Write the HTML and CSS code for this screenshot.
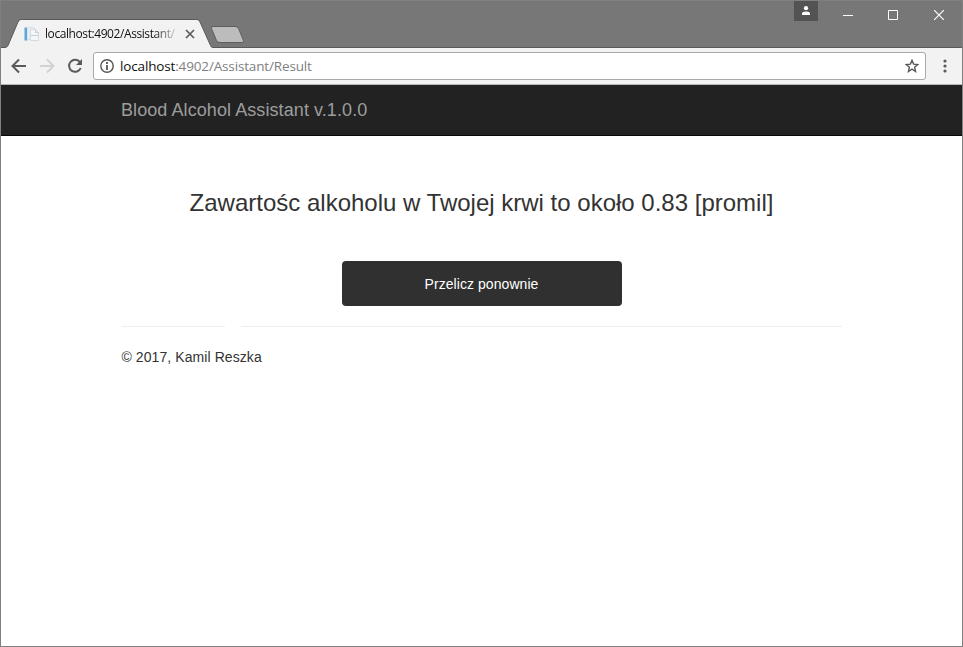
FILE: index.html
```html
<!DOCTYPE html>
<html lang="pl">
<head>
<meta charset="utf-8">
<title>Blood Alcohol Assistant</title>
<link rel="stylesheet" href="styles.css">
</head>
<body>
<div class="window">
  <header class="titlebar">
    <div class="tab">
      <svg class="tab-shape" width="214" height="29" viewBox="0 0 214 29"><path d="M0 28.500H4Q6 28.500 7 26.500L17 3Q18 .5 20 .5H196Q198 .5 199 3L209.500 26.500Q210 28.500 212 28.500V29H0Z" fill="#f2f2f2"/><path d="M0 28.500H4Q6 28.500 7 26.500L17 3Q18 .5 20 .5H196Q198 .5 199 3L209.500 26.500Q210 28.500 212 28.500" fill="none" stroke="#5b585a"/></svg>
      <svg class="favicon" width="16" height="16" viewBox="0 0 16 16"><path d="M.5 1.500h3v13h-3z" fill="#5aa7dc"/><path d="M3.500 1.500h7v12h-7z" fill="#e9edf0" stroke="#dde2e6"/><path d="M6.500 3.500h5l3 3v8h-8z" fill="#f4f7fa" stroke="#d3dae2"/><path d="M11.500 3.500v3h3M7 9.500h7" fill="none" stroke="#c3cfdb"/></svg>
      <span class="tab-title">localhost:4902/Assistant/</span>
      <svg class="tab-close" width="10" height="10" viewBox="0 0 10 10"><path d="M1 1l8 8M9 1L1 9" stroke="#5a5a5a" stroke-width="1.700"/></svg>
    </div>
    <svg class="new-tab" width="36" height="18" viewBox="0 0 36 18"><path d="M3 .5H25Q27.500 .5 28.500 2.500L33.500 14.500Q34 16.500 32 16.500H10Q7.500 16.500 6.500 14.500L1.500 2.500Q1 .5 3 .5Z" fill="#bcbcbc" stroke="#5e5e5e"/></svg>
    <div class="controls">
      <div class="profile"><svg width="10" height="10" viewBox="0 0 10 10"><circle cx="5" cy="2.200" r="2.100" fill="#fff"/><path d="M1 9V7.500Q1 5.500 5 5.500T9 7.500V9Z" fill="#fff"/></svg></div>
      <svg width="10" height="10" viewBox="0 0 10 10"><path d="M0 5.500h10" stroke="#fff"/></svg>
      <svg width="10" height="10" viewBox="0 0 10 10"><path d="M.5.5h9v9h-9z" fill="none" stroke="#fff"/></svg>
      <svg width="10" height="10" viewBox="0 0 10 10"><path d="M0 0l10 10M10 0L0 10" stroke="#fff" stroke-width="1.200"/></svg>
    </div>
  </header>
  <div class="toolbar">
    <svg class="nav-icon" width="16" height="16" viewBox="0 0 16 16"><path d="M15 8H2M8 1.500L1.500 8L8 14.500" fill="none" stroke="#5a5a5a" stroke-width="2"/></svg>
    <svg class="nav-icon" width="16" height="16" viewBox="0 0 16 16"><path d="M1 8h13M8 1.500L14.500 8L8 14.500" fill="none" stroke="#d2d2d2" stroke-width="2"/></svg>
    <svg class="nav-icon" width="16" height="16" viewBox="0 0 16 16"><path d="M13 4.300A6 6 0 1 0 13.700 10" fill="none" stroke="#5a5a5a" stroke-width="2"/><path d="M15 1v6H9Z" fill="#5a5a5a"/></svg>
    <div class="address">
      <svg width="14" height="14" viewBox="0 0 14 14"><circle cx="7" cy="7" r="6.200" fill="none" stroke="#555" stroke-width="1.400"/><path d="M7 3v2M7 6v5" stroke="#555" stroke-width="1.800"/></svg>
      <span class="url"><b>localhost</b>:4902/Assistant/Result</span>
      <svg class="star" width="14" height="14" viewBox="0 0 14 14"><path d="M7 1.300L8.600 5.100L12.800 5.500L9.600 8.200L10.600 12.500L7 10.200L3.400 12.500L4.400 8.200L1.200 5.500L5.400 5.100Z" fill="none" stroke="#5a5a5a" stroke-width="1.400"/></svg>
    </div>
    <svg class="menu" width="4" height="14" viewBox="0 0 4 14"><g fill="#5a5a5a"><circle cx="2" cy="2" r="1.600"/><circle cx="2" cy="7" r="1.600"/><circle cx="2" cy="12" r="1.600"/></g></svg>
  </div>
  <nav class="navbar"><a class="brand">Blood Alcohol Assistant v.1.0.0</a></nav>
  <main class="container">
    <h3>Zawartośc alkoholu w Twojej krwi to około 0.83 [promil]</h3>
    <button class="again">Przelicz ponownie</button>
    <div class="rules"><hr><hr></div>
    <footer>© 2017, Kamil Reszka</footer>
  </main>
</div>
</body>
</html>
```
FILE: styles.css
```css
* { box-sizing: border-box; }
body { margin: 0; background: #fff; font-family: "Liberation Sans", Arial, sans-serif; color: #333; }
svg { display: block; flex: none; }
.window { height: 647px; border: 1px solid #808080; overflow: hidden; }
.titlebar { display: flex; height: 47px; background: #777; border-bottom: 1px solid #5b585a; }
.tab { position: relative; display: flex; align-items: center; width: 209px; height: 29px; margin-top: 18px; padding-left: 23px; font-family: "Open Sans", sans-serif; font-size: 12px; color: #000; }
.tab-shape { position: absolute; left: 0; top: 0; }
.favicon, .tab-title, .tab-close { position: relative; }
.tab-title { width: 132px; margin-left: 5px; white-space: nowrap; letter-spacing: -.42px; color: transparent; background: linear-gradient(90deg, #111 108px, #ddd 133px); background-clip: text; -webkit-background-clip: text; }
.tab-close { margin-left: 8px; }
.new-tab { margin: 25px 0 0; }
.controls { display: flex; margin-left: auto; padding-right: 18px; align-items: flex-start; }
.controls > svg { margin-top: 9px; margin-left: 36px; }
.controls > .profile + svg { margin-left: 25px; }
.controls > .profile + svg + svg { margin-left: 35px; }
.profile { display: flex; justify-content: center; width: 24px; height: 20px; padding-top: 5px; background: #535353; }
.toolbar { display: flex; align-items: center; height: 37px; padding: 0 16px 0 10px; background: #f2f2f2; border-bottom: 1px solid #b6b6b6; }
.nav-icon { margin-right: 12px; }
.address { display: flex; align-items: center; width: 833px; height: 28px; margin-left: -2px; padding: 0 6px; background: #fff; border: 1px solid #a9a9a9; border-radius: 3px; }
.url { margin-left: 6px; font: 13.5px/20px "Open Sans", sans-serif; letter-spacing: -.15px; color: #808080; white-space: nowrap; }
.url b { font-weight: 400; color: #111; }
.star { margin-left: auto; }
.menu { margin-left: auto; margin-right: -1px; }
.navbar { height: 51px; padding: 15px 120px; background: #222; border-bottom: 1px solid #080808; font-size: 18px; line-height: 20px; }
.brand { color: #9d9d9d; letter-spacing: .08px; }
.container { width: 720px; margin: 0 auto; padding-top: 53px; font-size: 14px; line-height: 20px; }
h3 { margin: 0 0 45px; font-size: 24px; line-height: 27px; font-weight: 400; text-align: center; white-space: nowrap; }
.again { display: block; width: 280px; height: 45px; margin: 0 auto; padding: 0; border: 0; border-radius: 4px; background: #303030; color: #fff; font: 14px/20px "Liberation Sans", Arial, sans-serif; letter-spacing: .06px; }
.rules { display: grid; grid-template-columns: 103px 601px; gap: 16px; margin: 20px 0; }
.rules hr { width: 100%; height: 1px; margin: 0; border: 0; background: #eee; }
footer { letter-spacing: .08px; }
```
